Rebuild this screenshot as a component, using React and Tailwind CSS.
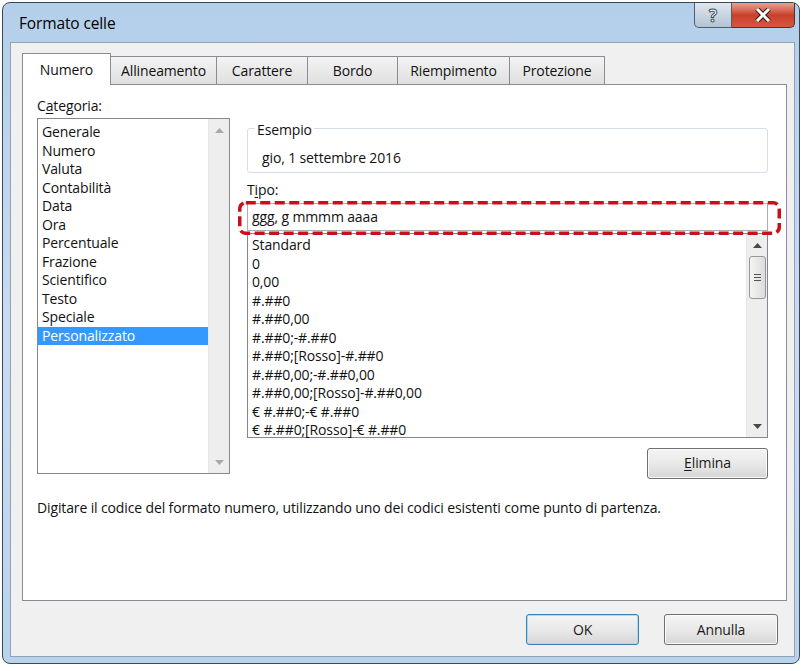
import React from "react";

const cats = ["Generale","Numero","Valuta","Contabilità","Data","Ora","Percentuale","Frazione","Scientifico","Testo","Speciale","Personalizzato"];
const fmts = ["Standard","0","0,00","#.##0","#.##0,00","#.##0;-#.##0","#.##0;[Rosso]-#.##0","#.##0,00;-#.##0,00","#.##0,00;[Rosso]-#.##0,00","€ #.##0;-€ #.##0","€ #.##0;[Rosso]-€ #.##0"];

function Arrow({ up, light }) {
  return (
    <svg width="9" height="5" viewBox="0 0 9 5">
      <path d={up ? "M0 5 L4.5 0 L9 5 Z" : "M0 0 L4.5 5 L9 0 Z"} fill={light ? "#a8a8a8" : "#4a4a4a"} />
    </svg>
  );
}

function ScrollBar({ light, thumb }) {
  return (
    <div className="w-[21px] bg-[#eeeeee] border-l border-[#e6e6e6] flex flex-col items-center">
      <div className="h-[22px] flex items-center justify-center w-full"><Arrow up light={light} /></div>
      {thumb && (
        <div className="w-[17px] h-[43px] rounded-[3px] border border-[#979797] bg-gradient-to-r from-[#f4f4f4] to-[#dcdcdc] flex flex-col items-center justify-center gap-[2px]">
          <div className="w-[7px] h-px bg-[#555]" />
          <div className="w-[7px] h-px bg-[#555]" />
          <div className="w-[7px] h-px bg-[#555]" />
        </div>
      )}
      <div className="flex-1" />
      <div className="h-[22px] flex items-center justify-center w-full"><Arrow light={light} /></div>
    </div>
  );
}

function Btn({ children, w, focus }) {
  return (
    <div className={`h-[31px] rounded-[3px] border flex items-center justify-center text-[14px] text-[#1a1a1a] bg-gradient-to-b from-[#f4f4f4] via-[#e9e9e9] to-[#d6d6d6] ${focus ? "border-[#3c7fb1] shadow-[inset_0_0_0_1px_#a8dcf4]" : "border-[#707070] shadow-[inset_0_0_0_1px_#fafafa]"} ${w}`}>
      {children}
    </div>
  );
}

export default function App() {
  return (
    <div className="w-[807px] h-[671px] bg-white pt-[2px] pl-[2px] font-['Open_Sans',sans-serif] text-[#111] tracking-[-0.13px]">
      <div className="w-[798px] h-[662px] rounded-[8px] border border-[#3a4858] bg-gradient-to-b from-[#b4cfea] via-[#c8dcf1] to-[#b9d3ec] flex flex-col pl-[7px] pr-[4px] pb-[6px]">
        <div className="h-[39px] relative flex items-center pl-[9px] pt-[3px]">
          <span className="text-[15.5px] text-black">Formato celle</span>
          <div className="absolute top-0 right-[0px] flex">
            <div className="w-[38px] h-[25px] rounded-bl-[5px] border border-t-0 border-[#4f5d6c] bg-gradient-to-b from-[#dfe7ef] to-[#b3c3d4] flex items-center justify-center">
              <span className="text-[17px] font-bold text-white [-webkit-text-stroke:1px_#3a4a5a] leading-none">?</span>
            </div>
            <div className="w-[63px] h-[25px] rounded-br-[5px] border border-l-0 border-t-0 border-[#4f3030] bg-gradient-to-b from-[#e8a090] via-[#c9402a] to-[#d8553c] flex items-center justify-center">
              <svg width="16" height="14" viewBox="0 0 16 14">
                <path d="M2 1 L14 13 M14 1 L2 13" stroke="#3a1a14" strokeWidth="5" fill="none" />
                <path d="M2 1 L14 13 M14 1 L2 13" stroke="#ffffff" strokeWidth="3" fill="none" />
              </svg>
            </div>
          </div>
        </div>
        <div className="flex-1 border border-[#8ba2ba] bg-[#f0f0f0] pt-[10px] pl-[11px] flex flex-col">
          <div className="flex items-end h-[31px] text-[14px]">
            <div className="relative z-10 -mb-px w-[89px] h-[32px] bg-white border-l border-t border-r border-[#898c95] flex items-center justify-center">Numero</div>
            <div className="w-[105px] h-[28px] border-t border-[#898c95] bg-gradient-to-b from-[#f3f3f3] to-[#e0e0e0] flex items-center justify-center">Allineamento</div>
            <div className="w-[91px] h-[28px] border-t border-l border-[#898c95] bg-gradient-to-b from-[#f3f3f3] to-[#e0e0e0] flex items-center justify-center">Carattere</div>
            <div className="w-[90px] h-[28px] border-t border-l border-[#898c95] bg-gradient-to-b from-[#f3f3f3] to-[#e0e0e0] flex items-center justify-center">Bordo</div>
            <div className="w-[112px] h-[28px] border-t border-l border-[#898c95] bg-gradient-to-b from-[#f3f3f3] to-[#e0e0e0] flex items-center justify-center">Riempimento</div>
            <div className="w-[96px] h-[28px] border-t border-l border-r border-[#898c95] bg-gradient-to-b from-[#f3f3f3] to-[#e0e0e0] flex items-center justify-center">Protezione</div>
          </div>
          <div className="w-[765px] h-[517px] border border-[#898c95] bg-white pt-[12px] pl-[14px] text-[14px] leading-[18.5px]">
            <div className="grid grid-cols-[193px_521px] gap-x-[17px]">
              <div className="flex flex-col">
                <div className="h-[18px] leading-[18px]">C<span className="underline underline-offset-2">a</span>tegoria:</div>
                <div className="mt-[3px] h-[356px] border border-[#828790] flex">
                  <div className="flex-1 pt-[4px] flex flex-col">
                    {cats.map((c) => (
                      <div key={c} className={`h-[18.5px] pl-[4px] ${c === "Personalizzato" ? "bg-[#3399ff] text-white" : ""}`}>{c}</div>
                    ))}
                  </div>
                  <ScrollBar light />
                </div>
              </div>
              <div className="flex flex-col pt-[31px]">
                <div className="relative h-[45px] border border-[#d5dfe5] rounded-[3px] pt-[20px] pl-[14px]">
                  <span className="absolute left-[7px] top-[-8px] bg-white px-[2px] leading-[18px]">Esempio</span>
                  <div className="leading-[18px]">gio, 1 settembre 2016</div>
                </div>
                <div className="mt-[8px] h-[18px] leading-[18px]">T<span className="underline underline-offset-2">i</span>po:</div>
                <div className="relative mt-[4px] h-[28px] border border-[#abadb3] pl-[4px] flex items-center">
                  ggg, g mmmm aaaa
                  <svg className="absolute left-[-10px] top-[-3px]" width="543" height="34" viewBox="0 0 543 34">
                    <rect x="1.75" y="1.75" width="539.5" height="30.5" rx="6" ry="6" fill="none" stroke="#c8101a" strokeWidth="3.5" strokeDasharray="10 4.5" />
                  </svg>
                </div>
                <div className="mt-[2px] h-[205px] border border-[#828790] flex">
                  <div className="flex-1 pt-[2px] pl-[4px] flex flex-col">
                    {fmts.map((f) => (
                      <div key={f} className="h-[18.5px]">{f}</div>
                    ))}
                  </div>
                  <ScrollBar thumb />
                </div>
                <div className="mt-[10px] flex justify-end">
                  <Btn w="w-[121px] h-[30px]"><span><span className="underline underline-offset-2">E</span>limina</span></Btn>
                </div>
              </div>
            </div>
            <div className="mt-[20px] leading-[18px]">Digitare il codice del formato numero, utilizzando uno dei codici esistenti come punto di partenza.</div>
          </div>
          <div className="mt-[13px] flex justify-end pr-[16px] gap-[25px]">
            <Btn w="w-[113px]" focus>OK</Btn>
            <Btn w="w-[114px]">Annulla</Btn>
          </div>
        </div>
      </div>
    </div>
  );
}
